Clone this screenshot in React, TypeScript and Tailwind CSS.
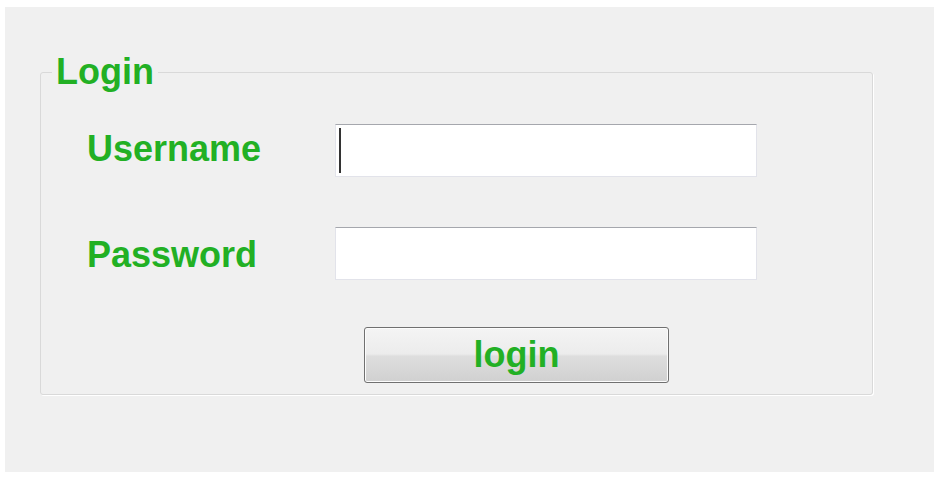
const LoginForm = () => {
  return (
    <div className="min-h-screen w-full bg-white pl-[5px] pt-[7px] font-['Liberation_Sans',Arial,sans-serif]">
      <div className="h-[465px] w-[929px] bg-[#f0f0f0] pt-[46px]">
        <fieldset className="ml-[35px] w-[833px] rounded-[3px] border border-[#d9d9d9] px-0 pt-[33px] pb-[11px] shadow-[1px_1px_0_#ffffff]">
          <legend className="ml-[11px] bg-[#f0f0f0] px-[4px] text-[36px] font-bold leading-[38px] text-[#22b024]">
            Login
          </legend>

          <div className="grid grid-cols-[248px_422px] items-center gap-y-[50px] pl-[46px]">
            <label className="-mt-[3px] text-[36px] font-bold leading-none text-[#22b024]">
              Username
            </label>
            <div className="flex h-[53px] items-center border border-[#e2e3ea] border-t-[#a5a7ad] bg-white pl-[3px]">
              <span className="h-[45px] w-[2px] bg-[#333333]" />
            </div>

            <label className="mt-[3px] text-[36px] font-bold leading-none text-[#22b024]">
              Password
            </label>
            <div className="h-[53px] border border-[#e2e3ea] border-t-[#a5a7ad] bg-white" />
          </div>

          <div className="mt-[47px] pl-[323px]">
            <button className="flex h-[56px] w-[305px] items-center justify-center rounded-[3px] border border-[#707070] bg-[linear-gradient(to_bottom,#f4f4f4_0%,#ececec_48%,#dedede_52%,#d0d0d0_100%)] text-[36px] font-bold leading-none text-[#22b024] shadow-[inset_0_0_0_1px_#fcfcfc]">
              login
            </button>
          </div>
        </fieldset>
      </div>
    </div>
  );
};

export default function App() {
  return <LoginForm />;
}
